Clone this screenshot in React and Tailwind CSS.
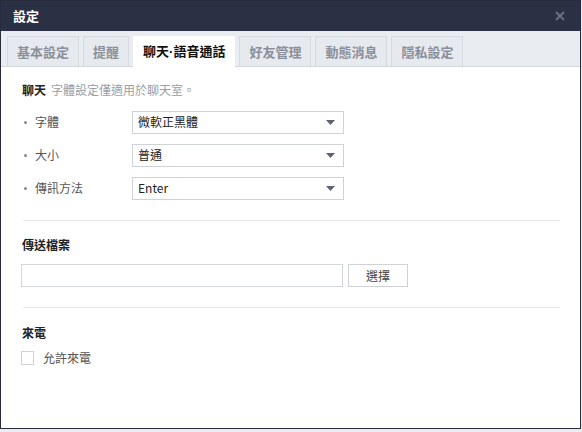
import React from "react";

const font = { fontFamily: '"Noto Sans CJK TC", "Noto Sans", sans-serif' };

function Caret() {
  return (
    <svg width="9" height="5" viewBox="0 0 9 5" className="shrink-0">
      <path d="M0 0 L9 0 L4.5 5 Z" fill="#5b6272" />
    </svg>
  );
}

function SelectRow({ label, value }) {
  return (
    <div className="flex items-center h-[22px]">
      <div className="w-[111px] flex items-center text-[12px] text-[#555]">
        <span className="w-[3px] h-[3px] rounded-full bg-[#888] ml-[3px] mr-[8px]" />
        <span>{label}</span>
      </div>
      <div className="w-[212px] h-[23px] border border-[#cfd2d6] bg-white flex items-center justify-between pl-[5px] pr-[8px] text-[12px] text-[#222]">
        <span>{value}</span>
        <Caret />
      </div>
    </div>
  );
}

function TabLabel({ t }) {
  if (t.includes("‧")) {
    const [a, b] = t.split("‧");
    return (
      <span>
        {a}
        <span style={{ fontFamily: '"Liberation Sans", sans-serif' }}>·</span>
        {b}
      </span>
    );
  }
  return <span>{t}</span>;
}

export default function App() {
  const tabs = ["基本設定", "提醒", "聊天‧語音通話", "好友管理", "動態消息", "隱私設定"];
  return (
    <div className="w-[582px] h-[432px] bg-[#ececec] overflow-hidden" style={font}>
      <div className="w-[581px] h-[429px] bg-white border border-[#262c3c] flex flex-col">
        <div className="h-[30px] bg-[#2b3145] flex items-center justify-between px-[12px] shrink-0">
          <span className="text-[13px] font-bold text-white">設定</span>
          <svg width="10" height="10" viewBox="0 0 10 10" className="mr-[3px]">
            <path d="M1 1 L9 9 M9 1 L1 9" stroke="#6d7385" strokeWidth="1.8" />
          </svg>
        </div>
        <div className="h-[36px] bg-[#e9ecf0] border-b border-[#d3d7dd] flex items-end pl-[6px] gap-[4px] shrink-0">
          {tabs.map((t, i) =>
            i === 2 ? (
              <div key={t} className="h-[31px] -mb-px bg-white px-[10px] flex items-center text-[13px] font-bold text-[#111]">
                <TabLabel t={t} />
              </div>
            ) : (
              <div key={t} className="h-[30px] bg-[#e6e9ed] border border-b-0 border-[#d6dae0] px-[9px] flex items-center text-[13px] font-bold text-[#8a909b]">
                <TabLabel t={t} />
              </div>
            )
          )}
        </div>
        <div className="flex-1 px-[20px] pt-[14px]">
          <div className="flex items-baseline gap-[5px] pl-[1px]">
            <span className="text-[12px] font-bold text-[#222]">聊天</span>
            <span className="text-[12px] text-[#9a9ea6]">字體設定僅適用於聊天室。</span>
          </div>
          <div className="flex flex-col gap-[11px] mt-[12px]">
            <SelectRow label="字體" value="微軟正黑體" />
            <SelectRow label="大小" value="普通" />
            <SelectRow label="傳訊方法" value="Enter" />
          </div>
          <div className="h-px bg-[#e8eaed] mt-[21px] ml-[2px]" />
          <div className="text-[12px] font-bold text-[#222] mt-[15px] pl-[1px]">傳送檔案</div>
          <div className="flex items-center gap-[5px] mt-[10px]">
            <div className="w-[322px] h-[23px] border border-[#d3d6da] bg-white" />
            <div className="w-[60px] h-[23px] border border-[#cfd2d6] bg-white flex items-center justify-center text-[12px] text-[#444]">
              選擇
            </div>
          </div>
          <div className="h-px bg-[#e8eaed] mt-[20px] ml-[2px]" />
          <div className="text-[12px] font-bold text-[#222] mt-[16px] pl-[1px]">來電</div>
          <div className="flex items-center gap-[9px] mt-[7px]">
            <div className="w-[13px] h-[14px] border border-[#cfd2d6] bg-white" />
            <span className="text-[12px] text-[#555]">允許來電</span>
          </div>
        </div>
      </div>
    </div>
  );
}
